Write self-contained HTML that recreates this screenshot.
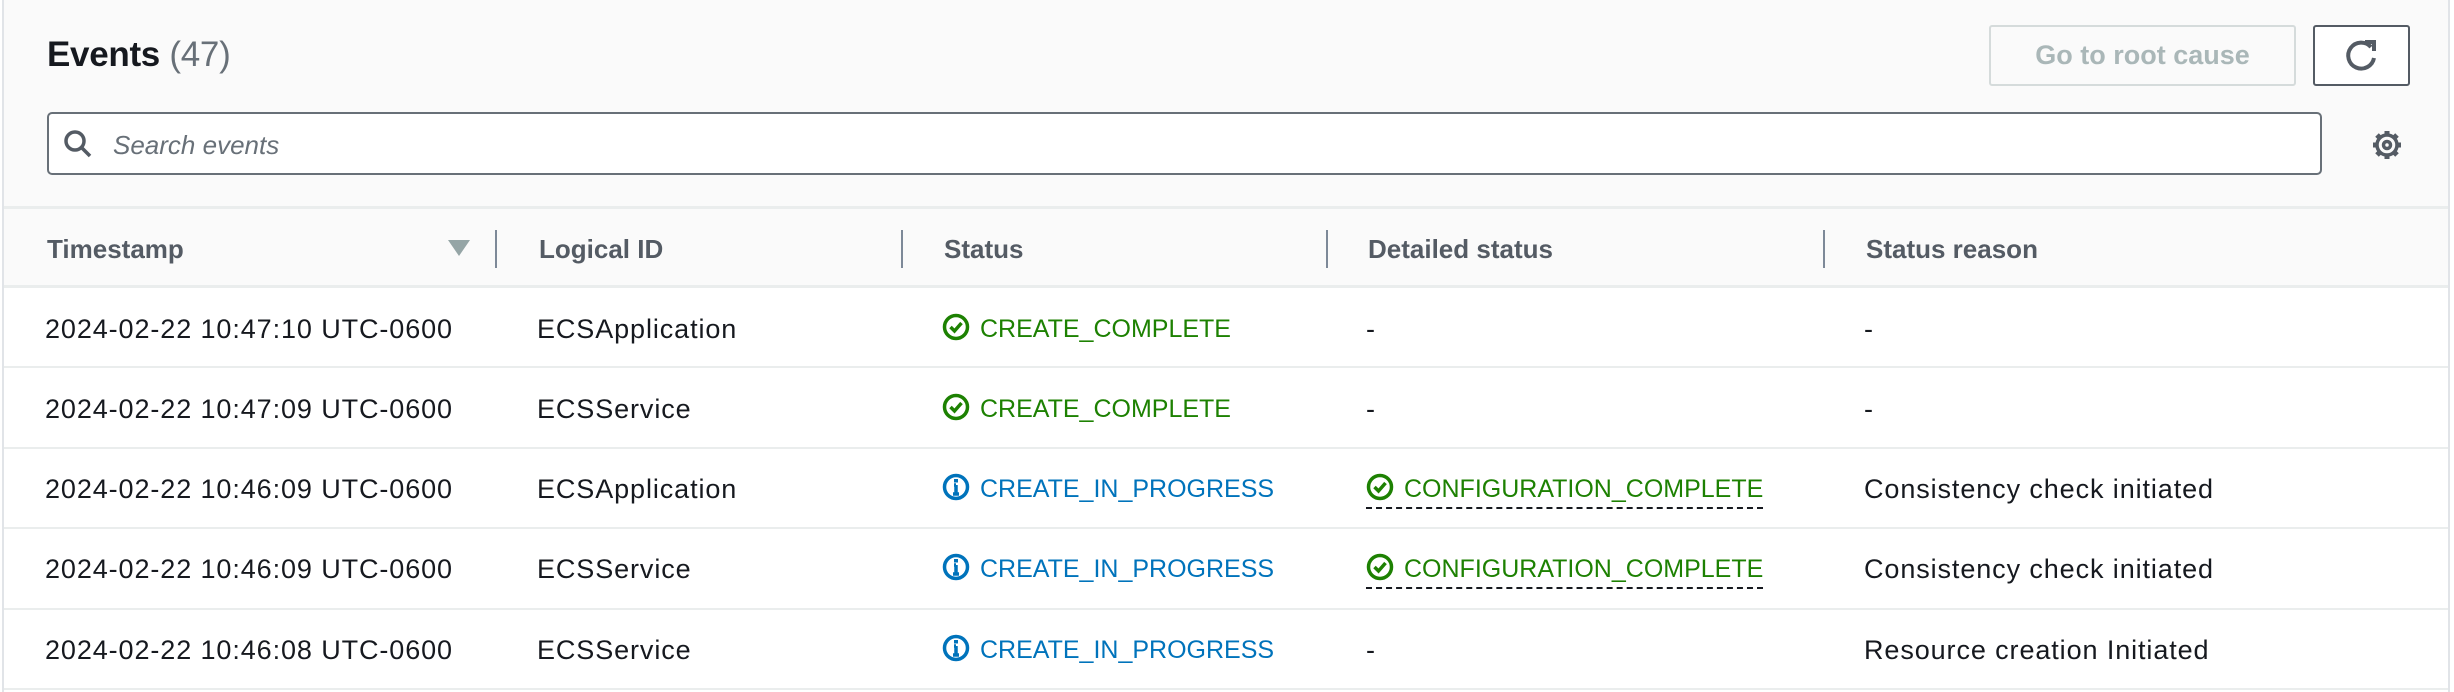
<!DOCTYPE html>
<html><head><meta charset="utf-8"><style>
*{box-sizing:border-box;margin:0;padding:0}
body{width:2454px;height:692px;background:#fff;font-family:"Liberation Sans",sans-serif;color:#16191f;position:relative;overflow:hidden}
.wrap{position:absolute;left:2px;top:0;width:2448px;height:692px;border-left:2px solid #e1e4e8;border-right:2px solid #e1e4e8}
.top{position:absolute;left:0;top:0;width:100%;height:287px;background:#fafafa}
.abs{position:absolute}
.title{left:43px;top:35px;font-size:35px;font-weight:bold;letter-spacing:-0.3px}
.title span{color:#687078;font-weight:normal}
.search{left:43px;top:112px;width:2275px;height:63px;border:2px solid #687078;border-radius:5px;background:#fff}
.ph{left:64px;top:16px;font-size:26px;font-style:italic;color:#687078}
.btn1{left:1985px;top:25px;width:307px;height:61px;border:2px solid #d5dbdb;border-radius:3px;background:#fafafa;color:#aab7b8;font-weight:bold;font-size:27px;text-align:center;line-height:57px}
.btn2{left:2309px;top:25px;width:97px;height:61px;border:2px solid #545b64;border-radius:3px;background:#fff}
.hline{left:0;width:100%;height:3px;background:#eaeded}
.th{font-size:26px;font-weight:bold;color:#545b64;top:234px}
.div{width:2px;height:38px;background:#7d8998;top:230px}
.td{font-size:27px;letter-spacing:0.9px;line-height:32px}
.g,.b{font-size:25px;letter-spacing:0}
.g{color:#1d8102}.b{color:#0073bb}
.ic{display:inline-block;vertical-align:-4px;margin-right:10px}
.dash{border-bottom:2px dashed #16191f;padding-bottom:4px}
.r{position:absolute;left:0;width:2454px;height:80px}.r div{position:absolute;top:24px}
</style></head><body>
<div class="wrap">
<div class="top"></div>
<div class="abs title">Events <span>(47)</span></div>
<div class="abs btn1">Go to root cause</div>
<div class="abs btn2"><svg width="93" height="57" viewBox="0 0 93 57"><path d="M56 20 A13 13 0 1 0 59 31" fill="none" stroke="#545b64" stroke-width="4"/><path d="M50 15 L59 15 L59 24" fill="none" stroke="#545b64" stroke-width="4"/></svg></div>
<div class="abs search"><svg class="abs" style="left:14px;top:15px" width="30" height="30" viewBox="0 0 30 30"><circle cx="12" cy="12" r="9" fill="none" stroke="#545b64" stroke-width="3.5"/><path d="M18 18 L27 27" stroke="#545b64" stroke-width="3.5"/></svg><div class="abs ph">Search events</div></div>
<svg class="abs" style="left:2366px;top:128px" width="34" height="34" viewBox="0 0 34 34"><g fill="none" stroke="#545b64" stroke-width="3.5"><circle cx="17" cy="17" r="10"/><circle cx="17" cy="17" r="3.5"/></g><g stroke="#545b64" stroke-width="5"><path d="M17 3v5M17 26v5M3 17h5M26 17h5M7 7l3.5 3.5M23.5 23.5L27 27M27 7l-3.5 3.5M10.5 23.5L7 27"/></g></svg>
<div class="abs hline" style="top:206px"></div>
<div class="abs hline" style="top:285px"></div>
<div class="abs th" style="left:43px">Timestamp</div>
<svg class="abs" style="left:444px;top:240px" width="22" height="16"><path d="M0 0h22L11 16z" fill="#95a5a6"/></svg>
<div class="abs div" style="left:491px"></div>
<div class="abs th" style="left:535px">Logical ID</div>
<div class="abs div" style="left:897px"></div>
<div class="abs th" style="left:940px">Status</div>
<div class="abs div" style="left:1322px"></div>
<div class="abs th" style="left:1364px">Detailed status</div>
<div class="abs div" style="left:1819px"></div>
<div class="abs th" style="left:1862px">Status reason</div>
<div class="abs hline" style="top:366px;height:2px"></div>
<div class="abs hline" style="top:447px;height:2px"></div>
<div class="abs hline" style="top:527px;height:2px"></div>
<div class="abs hline" style="top:608px;height:2px"></div>
<div class="abs hline" style="top:688px;height:2px"></div>
</div>
<div class="r" style="top:289px">
<div class="td" style="left:45px">2024-02-22 10:47:10 UTC-0600</div>
<div class="td" style="left:537px">ECSApplication</div>
<div class="td g" style="left:942px"><svg class="ic" width="28" height="28" viewBox="0 0 28 28"><circle cx="14" cy="14" r="11.5" fill="none" stroke="#1d8102" stroke-width="3.5"/><path d="M8.5 14l4 4 7-8" fill="none" stroke="#1d8102" stroke-width="3.5"/></svg>CREATE_COMPLETE</div>
<div class="td" style="left:1366px">-</div>
<div class="td" style="left:1864px">-</div>
</div>
<div class="r" style="top:369px">
<div class="td" style="left:45px">2024-02-22 10:47:09 UTC-0600</div>
<div class="td" style="left:537px">ECSService</div>
<div class="td g" style="left:942px"><svg class="ic" width="28" height="28" viewBox="0 0 28 28"><circle cx="14" cy="14" r="11.5" fill="none" stroke="#1d8102" stroke-width="3.5"/><path d="M8.5 14l4 4 7-8" fill="none" stroke="#1d8102" stroke-width="3.5"/></svg>CREATE_COMPLETE</div>
<div class="td" style="left:1366px">-</div>
<div class="td" style="left:1864px">-</div>
</div>
<div class="r" style="top:449px">
<div class="td" style="left:45px">2024-02-22 10:46:09 UTC-0600</div>
<div class="td" style="left:537px">ECSApplication</div>
<div class="td b" style="left:942px"><svg class="ic" width="28" height="28" viewBox="0 0 28 28"><circle cx="14" cy="14" r="11.5" fill="none" stroke="#0073bb" stroke-width="3.5"/><path d="M14 12v9M11 21h6M12 12h2" stroke="#0073bb" stroke-width="3.5" fill="none"/><rect x="12" y="6" width="4" height="3.5" fill="#0073bb"/></svg>CREATE_IN_PROGRESS</div>
<div class="td g" style="left:1366px"><span class="dash"><svg class="ic" width="28" height="28" viewBox="0 0 28 28"><circle cx="14" cy="14" r="11.5" fill="none" stroke="#1d8102" stroke-width="3.5"/><path d="M8.5 14l4 4 7-8" fill="none" stroke="#1d8102" stroke-width="3.5"/></svg>CONFIGURATION_COMPLETE</span></div>
<div class="td" style="left:1864px">Consistency check initiated</div>
</div>
<div class="r" style="top:529px">
<div class="td" style="left:45px">2024-02-22 10:46:09 UTC-0600</div>
<div class="td" style="left:537px">ECSService</div>
<div class="td b" style="left:942px"><svg class="ic" width="28" height="28" viewBox="0 0 28 28"><circle cx="14" cy="14" r="11.5" fill="none" stroke="#0073bb" stroke-width="3.5"/><path d="M14 12v9M11 21h6M12 12h2" stroke="#0073bb" stroke-width="3.5" fill="none"/><rect x="12" y="6" width="4" height="3.5" fill="#0073bb"/></svg>CREATE_IN_PROGRESS</div>
<div class="td g" style="left:1366px"><span class="dash"><svg class="ic" width="28" height="28" viewBox="0 0 28 28"><circle cx="14" cy="14" r="11.5" fill="none" stroke="#1d8102" stroke-width="3.5"/><path d="M8.5 14l4 4 7-8" fill="none" stroke="#1d8102" stroke-width="3.5"/></svg>CONFIGURATION_COMPLETE</span></div>
<div class="td" style="left:1864px">Consistency check initiated</div>
</div>
<div class="r" style="top:610px">
<div class="td" style="left:45px">2024-02-22 10:46:08 UTC-0600</div>
<div class="td" style="left:537px">ECSService</div>
<div class="td b" style="left:942px"><svg class="ic" width="28" height="28" viewBox="0 0 28 28"><circle cx="14" cy="14" r="11.5" fill="none" stroke="#0073bb" stroke-width="3.5"/><path d="M14 12v9M11 21h6M12 12h2" stroke="#0073bb" stroke-width="3.5" fill="none"/><rect x="12" y="6" width="4" height="3.5" fill="#0073bb"/></svg>CREATE_IN_PROGRESS</div>
<div class="td" style="left:1366px">-</div>
<div class="td" style="left:1864px">Resource creation Initiated</div>
</div>
</body></html>
